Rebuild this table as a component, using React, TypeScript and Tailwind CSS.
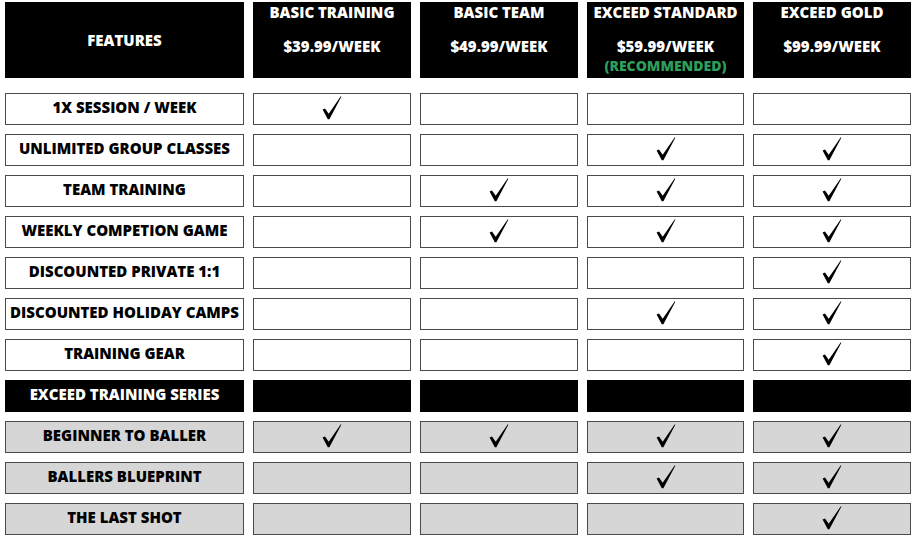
import React from 'react';

type Row = {
  label: string;
  checks: boolean[];
  tone: 'white' | 'gray' | 'black';
};

const plans = [
  { name: 'BASIC TRAINING', price: '$39.99/WEEK' },
  { name: 'BASIC TEAM', price: '$49.99/WEEK' },
  { name: 'EXCEED STANDARD', price: '$59.99/WEEK', note: '(RECOMMENDED)' },
  { name: 'EXCEED GOLD', price: '$99.99/WEEK' },
];

const rows: Row[] = [
  { label: '1X SESSION / WEEK', checks: [true, false, false, false], tone: 'white' },
  { label: 'UNLIMITED GROUP CLASSES', checks: [false, false, true, true], tone: 'white' },
  { label: 'TEAM TRAINING', checks: [false, true, true, true], tone: 'white' },
  { label: 'WEEKLY COMPETION GAME', checks: [false, true, true, true], tone: 'white' },
  { label: 'DISCOUNTED PRIVATE 1:1', checks: [false, false, false, true], tone: 'white' },
  { label: 'DISCOUNTED HOLIDAY CAMPS', checks: [false, false, true, true], tone: 'white' },
  { label: 'TRAINING GEAR', checks: [false, false, false, true], tone: 'white' },
  { label: 'EXCEED TRAINING SERIES', checks: [false, false, false, false], tone: 'black' },
  { label: 'BEGINNER TO BALLER', checks: [true, true, true, true], tone: 'gray' },
  { label: 'BALLERS BLUEPRINT', checks: [false, false, true, true], tone: 'gray' },
  { label: 'THE LAST SHOT', checks: [false, false, false, true], tone: 'gray' },
];

// hand drawn style tick: heavy short stroke, hairline long stroke
const Check = () => (
  <svg width="20" height="24" viewBox="0 0 20 24" className="block">
    <path d="M0.6 13.6 L3.0 12.4 L6.7 17.8 L18.8 0.3 L19.3 0.8 L7.4 23.2 L5.8 23.2 Z" fill="#000" />
  </svg>
);

const cellClass = (tone: Row['tone']) => {
  if (tone === 'black') return 'bg-black';
  if (tone === 'gray') return 'bg-[#d6d6d6] border-[1.5px] border-[#4a4a4a]';
  return 'bg-white border-[1.5px] border-[#4a4a4a]';
};

export default function App() {
  return (
    <div
      className="w-[918px] h-[542px] bg-white pl-[5px] pt-[2px] text-black"
      style={{ fontFamily: '"Open Sans", "Liberation Sans", sans-serif' }}
    >
      <div className="grid grid-cols-[239px_158px_158px_157px_158px] gap-x-[9px] gap-y-[9px]">
        {/* header */}
        <div className="h-[76px] mb-[6px] bg-black flex items-center justify-center">
          <span className="text-white text-[15px] font-extrabold">FEATURES</span>
        </div>
        {plans.map((p) => (
          <div key={p.name} className="h-[76px] mb-[6px] bg-black flex flex-col items-center">
            <span className="text-white text-[15px] leading-[20px] font-extrabold whitespace-nowrap">{p.name}</span>
            <span className="text-white text-[15px] leading-[16px] font-extrabold mt-[16px] whitespace-nowrap">{p.price}</span>
            {p.note && (
              <span className="text-[#2e9e5b] text-[14px] leading-[16px] font-extrabold mt-[4px] whitespace-nowrap">{p.note}</span>
            )}
          </div>
        ))}

        {rows.map((r) => (
          <React.Fragment key={r.label}>
            <div className={`h-[32px] pb-[3px] flex items-center justify-center ${cellClass(r.tone)}`}>
              <span
                className={`text-[15px] font-extrabold whitespace-nowrap ${r.tone === 'black' ? 'text-white' : 'text-black'}`}
              >
                {r.label}
              </span>
            </div>
            {r.checks.map((c, i) => (
              <div key={i} className={`h-[32px] pb-[3px] flex items-center justify-center ${cellClass(r.tone)}`}>
                {c && <Check />}
              </div>
            ))}
          </React.Fragment>
        ))}
      </div>
    </div>
  );
}
